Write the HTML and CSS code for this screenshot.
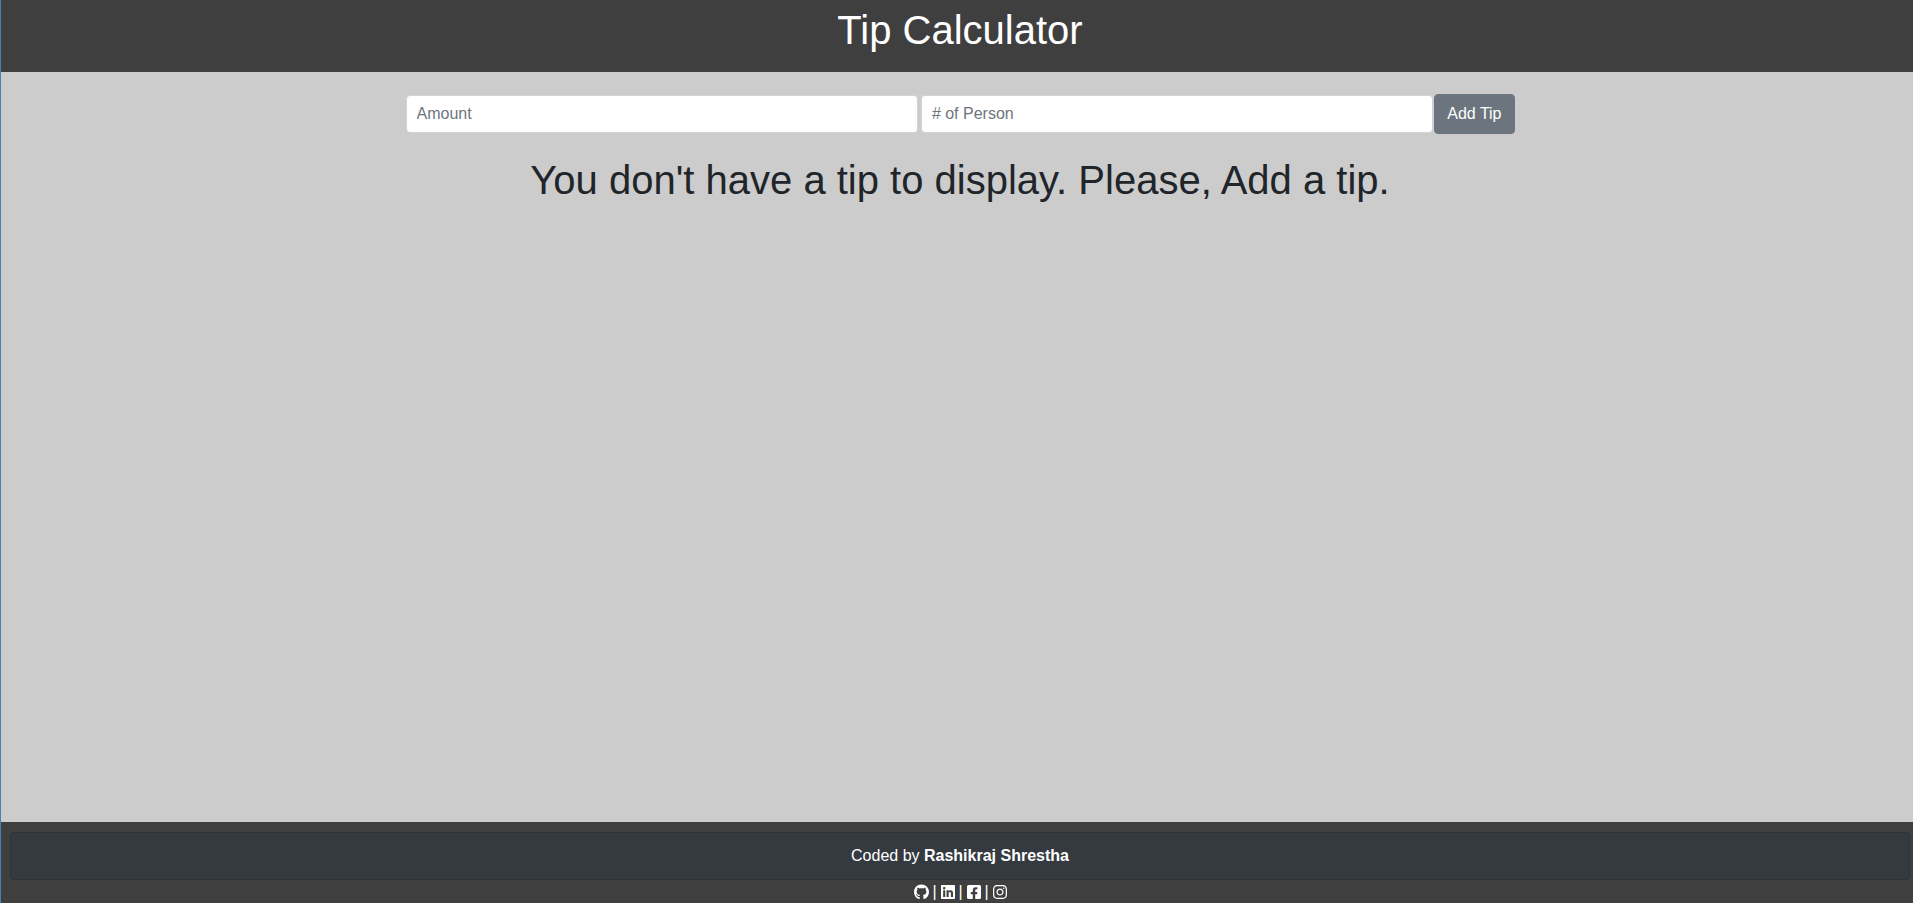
FILE: index.html
```html
<!DOCTYPE html>
<html lang="en">
<head>
<meta charset="utf-8">
<title>Tip Calculator</title>
<link rel="stylesheet" href="styles.css">
</head>
<body>
<div class="page">
  <header class="header"><h1 class="title">Tip Calculator</h1></header>
  <main class="main">
    <form class="tip-form">
      <input class="field" type="text" placeholder="Amount" aria-label="Amount">
      <input class="field field-next" type="text" placeholder="# of Person" aria-label="# of Person">
      <button class="button" type="button">Add Tip</button>
    </form>
    <h2 class="message">You don't have a tip to display. Please, Add a tip.</h2>
  </main>
  <footer class="footer">
    <div class="credit">Coded by <strong>Rashikraj Shrestha</strong></div>
    <nav class="social">
      <a href="#" aria-label="GitHub"><svg class="icon icon-wide" viewBox="0 0 496 512"><path d="M165.900 397.400c0 2-2.300 3.600-5.200 3.600-3.300.3-5.600-1.300-5.600-3.600 0-2 2.300-3.600 5.200-3.600 3-.3 5.600 1.300 5.600 3.600zM244.800 8C106.100 8 0 113.300 0 252c0 110.900 69.800 205.800 169.500 239.200 12.800 2.300 17.300-5.600 17.300-12.100 0-6.200-.3-40.400-.3-61.400 0 0-70 15-84.700-29.800 0 0-11.400-29.100-27.800-36.600 0 0-22.900-15.700 1.600-15.400 0 0 24.900 2 38.600 25.800 21.900 38.600 58.600 27.500 72.900 20.900 2.300-16 8.800-27.100 16-33.700-55.900-6.200-112.300-14.300-112.300-110.500 0-27.500 7.600-41.300 23.600-58.900-2.600-6.500-11.100-33.300 2.600-67.900 20.900-6.500 69 27 69 27 20-5.600 41.500-8.500 62.800-8.500s42.800 2.900 62.800 8.500c0 0 48.100-33.600 69-27 13.700 34.700 5.200 61.400 2.600 67.900 16 17.700 25.800 31.500 25.800 58.900 0 96.500-58.900 104.200-114.800 110.500 9.200 7.900 17 22.900 17 46.400 0 33.700-.3 75.400-.3 83.600 0 6.500 4.600 14.400 17.300 12.100C428.200 457.800 496 362.900 496 252 496 113.300 383.500 8 244.800 8z"/></svg></a>
      <span class="bar">|</span>
      <a href="#" aria-label="LinkedIn"><svg class="icon" viewBox="0 0 448 512"><path d="M416 32H31.900C14.300 32 0 46.500 0 64.300v383.400C0 465.500 14.300 480 31.900 480H416c17.600 0 32-14.500 32-32.300V64.300c0-17.800-14.400-32.300-32-32.300zM135.400 416H69V202.200h66.500V416zm-33.200-243c-21.300 0-38.500-17.300-38.500-38.500S80.900 96 102.200 96c21.200 0 38.500 17.300 38.500 38.500 0 21.300-17.200 38.500-38.500 38.500zm282.100 243h-66.400V312c0-24.800-.5-56.700-34.500-56.700-34.600 0-39.900 27-39.900 54.900V416h-66.400V202.200h63.700v29.200h.9c8.900-16.800 30.600-34.500 62.900-34.500 67.200 0 79.700 44.300 79.700 101.900V416z"/></svg></a>
      <span class="bar">|</span>
      <a href="#" aria-label="Facebook"><svg class="icon" viewBox="0 0 448 512"><path d="M400 32H48A48 48 0 0 0 0 80v352a48 48 0 0 0 48 48h137.250V327.690h-63V256h63v-54.640c0-62.150 37-96.480 93.670-96.480 27.140 0 55.520 4.840 55.520 4.840v61h-31.270c-30.810 0-40.420 19.120-40.420 38.730V256h68.780l-11 71.690h-57.780V480H400a48 48 0 0 0 48-48V80a48 48 0 0 0-48-48z"/></svg></a>
      <span class="bar">|</span>
      <a href="#" aria-label="Instagram"><svg class="icon" viewBox="0 0 448 512"><path d="M224.100 141c-63.600 0-114.900 51.300-114.900 114.900s51.300 114.900 114.900 114.900S339 319.500 339 255.900 287.700 141 224.100 141zm0 189.600c-41.100 0-74.700-33.500-74.700-74.700s33.500-74.700 74.700-74.700 74.700 33.500 74.700 74.700-33.600 74.700-74.700 74.700zm146.400-194.300c0 14.900-12 26.800-26.800 26.800-14.900 0-26.800-12-26.800-26.800s12-26.800 26.800-26.800 26.800 12 26.800 26.800zm76.100 27.200c-1.700-35.900-9.900-67.700-36.200-93.900-26.200-26.200-58-34.400-93.900-36.200-37-2.100-147.900-2.100-184.900 0-35.800 1.700-67.600 9.900-93.900 36.100s-34.400 58-36.200 93.900c-2.100 37-2.100 147.900 0 184.900 1.700 35.900 9.900 67.700 36.200 93.900s58 34.400 93.900 36.200c37 2.100 147.900 2.100 184.900 0 35.900-1.700 67.700-9.900 93.900-36.200 26.200-26.200 34.400-58 36.200-93.900 2.100-37 2.100-147.800 0-184.800zM398.800 388c-7.800 19.600-22.900 34.700-42.600 42.600-29.500 11.700-99.500 9-132.100 9s-102.700 2.600-132.100-9c-19.600-7.800-34.700-22.900-42.600-42.600-11.700-29.500-9-99.500-9-132.100s-2.600-102.700 9-132.100c7.800-19.600 22.900-34.700 42.600-42.600 29.500-11.700 99.500-9 132.100-9s102.700-2.600 132.100 9c19.600 7.800 34.700 22.900 42.600 42.600 11.700 29.500 9 99.500 9 132.100s2.700 102.700-9 132.100z"/></svg></a>
    </nav>
  </footer>
</div>
</body>
</html>
```
FILE: styles.css
```css
*, *::before, *::after { box-sizing: border-box; }

body {
  margin: 0;
  font: 16px/24px "Liberation Sans", Arial, sans-serif;
  color: #212529;
  background: #ccc;
}

.page {
  display: flex;
  flex-direction: column;
  min-height: 100vh;
  border-left: 1px solid #4682b4;
  text-align: center;
}

.header, .main, .footer { padding-left: 6px; }

.header {
  padding-top: 6px;
  padding-bottom: 18px;
  background: #3f3f3f;
  color: #fff;
}

.title, .message {
  margin: 0;
  font-size: 40px;
  font-weight: 400;
  line-height: 48px;
}

.main { flex: 1; padding-top: 22px; }

.tip-form {
  display: flex;
  align-items: center;
  gap: 1px;
  width: 90%;
  max-width: 1109px;
  margin: 0 auto 22px;
}

.field {
  flex: 1;
  min-width: 0;
  height: 38px;
  padding: 6px 10px;
  border: 1px solid #ced4da;
  border-radius: 4px;
  background: #fff;
  color: #495057;
  font: inherit;
}

.field-next { margin-left: 2px; }

.field::placeholder { color: #6c757d; opacity: 1; }

.button {
  padding: 7px 12px;
  border: 1px solid #6c757d;
  border-radius: 4px;
  background: #6c757d;
  color: #fff;
  font: inherit;
}

.footer { padding-top: 10px; background: #3f3f3f; color: #fff; }

.credit {
  margin: 0 3px;
  padding: 11px;
  border: 1px solid #2f3337;
  border-radius: 4px;
  background: #343a40;
}

.social {
  display: flex;
  justify-content: center;
  align-items: center;
  gap: 4px;
  height: 23px;
}

.social a { display: flex; color: #fff; }
.bar { width: 4px; line-height: 22px; }
.icon { width: 14px; height: 16px; fill: currentColor; }
.icon-wide { width: 15px; }
```
